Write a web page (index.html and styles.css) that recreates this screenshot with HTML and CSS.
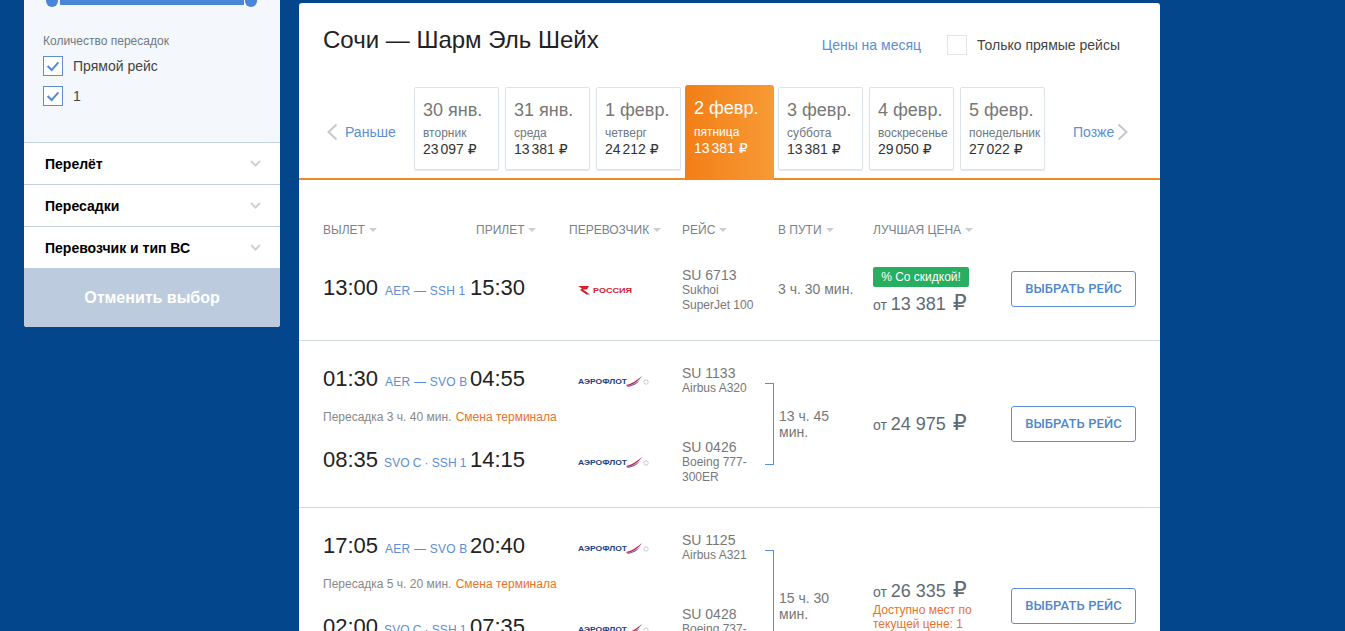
FILE: index.html
```html
<!DOCTYPE html>
<html lang="ru">
<head>
<meta charset="utf-8">
<title>Сочи — Шарм Эль Шейх</title>
<link rel="stylesheet" href="styles.css">
</head>
<body>
<svg class="defs" width="0" height="0" aria-hidden="true">
  <defs>
    <g id="aeroflot">
      <text x="1" y="12.5" class="aero-text" textLength="49" lengthAdjust="spacingAndGlyphs">АЭРОФЛОТ</text>
      <path d="M49 14 C55 13 60 9 65 5 C62 10 56 14 50 15 Z" fill="#c8204a"/>
      <path d="M50 15 C56 14 60 11 63 9 C60 13 56 15 51 16 Z" fill="#7b5aa6"/>
      <circle cx="69" cy="11" r="2.2" fill="none" stroke="#b9bec6" stroke-width=".8"/>
    </g>
    <path id="chev" d="M1 1 L5.500 5.500 L10 1" fill="none" stroke="#cdd2d8" stroke-width="2"/>
    <path id="tick" d="M4 10 L8.5 14.5 L16 6" fill="none" stroke="#4d8ad8" stroke-width="2.2"/>
  </defs>
</svg>
<aside class="sidebar">
  <div class="filter-box">
    <div class="slider"><span class="handle"></span><span class="track"></span><span class="handle"></span></div>
    <div class="filter-label">Количество пересадок</div>
    <div class="check-row"><span class="check"><svg width="18" height="18" viewBox="0 0 20 20"><use href="#tick"/></svg></span>Прямой рейс</div>
    <div class="check-row"><span class="check"><svg width="18" height="18" viewBox="0 0 20 20"><use href="#tick"/></svg></span>1</div>
  </div>
  <div class="acc">Перелёт<svg width="11" height="7"><use href="#chev"/></svg></div>
  <div class="acc">Пересадки<svg width="11" height="7"><use href="#chev"/></svg></div>
  <div class="acc">Перевозчик и тип ВС<svg width="11" height="7"><use href="#chev"/></svg></div>
  <div class="cancel">Отменить выбор</div>
</aside>
<main class="panel">
  <header class="head">
    <div class="title-row">
      <h1 class="title">Сочи — Шарм Эль Шейх</h1>
      <div class="options">
        <a class="month-link">Цены на месяц</a>
        <span class="box"></span>
        <span class="direct">Только прямые рейсы</span>
      </div>
    </div>
    <div class="strip">
      <div class="nav nav-prev"><svg width="12" height="18" viewBox="0 0 12 18"><path d="M10.5 1.5 L2.5 9 L10.5 16.5" fill="none" stroke="#c4c9cf" stroke-width="2"/></svg>Раньше</div>
      <div class="day"><b>30 янв.</b><i>вторник</i><span>23 097 <u class="rub">₽</u></span></div>
      <div class="day"><b>31 янв.</b><i>среда</i><span>13 381 <u class="rub">₽</u></span></div>
      <div class="day"><b>1 февр.</b><i>четверг</i><span>24 212 <u class="rub">₽</u></span></div>
      <div class="day day-active"><b>2 февр.</b><i>пятница</i><span>13 381 <u class="rub">₽</u></span></div>
      <div class="day"><b>3 февр.</b><i>суббота</i><span>13 381 <u class="rub">₽</u></span></div>
      <div class="day"><b>4 февр.</b><i>воскресенье</i><span>29 050 <u class="rub">₽</u></span></div>
      <div class="day"><b>5 февр.</b><i>понедельник</i><span>27 022 <u class="rub">₽</u></span></div>
      <div class="nav nav-next">Позже<svg width="12" height="18" viewBox="0 0 12 18"><path d="M1.5 1.5 L9.5 9 L1.5 16.5" fill="none" stroke="#c4c9cf" stroke-width="2"/></svg></div>
    </div>
  </header>

  <div class="cols">
    <span>ВЫЛЕТ</span><span>ПРИЛЕТ</span><span>ПЕРЕВОЗЧИК</span><span>РЕЙС</span><span>В ПУТИ</span><span>ЛУЧШАЯ ЦЕНА</span>
  </div>

  <section class="row row-first">
    <div class="legs">
      <div class="leg">
        <div class="dep"><span class="time">13:00</span><span class="route">AER — SSH 1</span></div>
        <div class="time">15:30</div>
        <div class="logo"><svg width="80" height="20" viewBox="0 0 80 20"><path d="M1 6 H12 L10 9.500 H6 L13 14.500 L9.500 14.500 L3 10 L5 8.500 Z" fill="#d5202f"/><text x="16" y="13" class="ross-text" textLength="39" lengthAdjust="spacingAndGlyphs">РОССИЯ</text></svg></div>
        <div class="flight"><strong>SU 6713</strong>Sukhoi<br>SuperJet 100</div>
      </div>
    </div>
    <div class="dur">3 ч. 30 мин.</div>
    <div class="price-cell"><div><span class="badge">% Со скидкой!</span><div class="price">от <em>13 381 <u class="rub">₽</u></em></div></div></div>
    <div class="btn-cell"><a class="btn">ВЫБРАТЬ РЕЙС</a></div>
  </section>

  <section class="row">
    <div class="legs">
      <div class="leg">
        <div class="dep"><span class="time">01:30</span><span class="route">AER — SVO B</span></div>
        <div class="time">04:55</div>
        <div class="logo"><svg width="80" height="20" viewBox="0 0 80 20"><use href="#aeroflot"/></svg></div>
        <div class="flight"><strong>SU 1133</strong>Airbus A320</div>
      </div>
      <div class="transfer">Пересадка 3 ч. 40 мин. <span>Смена терминала</span></div>
      <div class="leg">
        <div class="dep"><span class="time">08:35</span><span class="route route-tight">SVO C · SSH 1</span></div>
        <div class="time">14:15</div>
        <div class="logo"><svg width="80" height="20" viewBox="0 0 80 20"><use href="#aeroflot"/></svg></div>
        <div class="flight"><strong>SU 0426</strong>Boeing 777-<br>300ER</div>
      </div>
    </div>
    <div class="dur dur-multi"><span class="bracket"></span><span class="dur-text">13 ч. 45 мин.</span></div>
    <div class="price-cell"><div class="price">от <em>24 975 <u class="rub">₽</u></em></div></div>
    <div class="btn-cell"><a class="btn">ВЫБРАТЬ РЕЙС</a></div>
  </section>

  <section class="row row-last">
    <div class="legs">
      <div class="leg">
        <div class="dep"><span class="time">17:05</span><span class="route">AER — SVO B</span></div>
        <div class="time">20:40</div>
        <div class="logo"><svg width="80" height="20" viewBox="0 0 80 20"><use href="#aeroflot"/></svg></div>
        <div class="flight"><strong>SU 1125</strong>Airbus A321</div>
      </div>
      <div class="transfer">Пересадка 5 ч. 20 мин. <span>Смена терминала</span></div>
      <div class="leg">
        <div class="dep"><span class="time">02:00</span><span class="route route-tight">SVO C · SSH 1</span></div>
        <div class="time">07:35</div>
        <div class="logo"><svg width="80" height="20" viewBox="0 0 80 20"><use href="#aeroflot"/></svg></div>
        <div class="flight"><strong>SU 0428</strong>Boeing 737-<br>800</div>
      </div>
    </div>
    <div class="dur dur-multi"><span class="bracket"></span><span class="dur-text">15 ч. 30 мин.</span></div>
    <div class="price-cell"><div><div class="price">от <em>26 335 <u class="rub">₽</u></em></div><div class="seats">Доступно мест по текущей цене: 1</div></div></div>
    <div class="btn-cell"><a class="btn">ВЫБРАТЬ РЕЙС</a></div>
  </section>
</main>
</body>
</html>
```

FILE: styles.css
```css
* { box-sizing: border-box; }
html, body { height: 631px; overflow: hidden; }
body {
  margin: 0;
  background: #03468c;
  display: flex;
  align-items: flex-start;
  font-family: "Liberation Sans", Arial, sans-serif;
  color: #333;
}
.defs { position: absolute; }
.aero-text { font: bold 8px "Liberation Sans", sans-serif; fill: #1c3f86; }
.ross-text { font: bold 7px "Liberation Sans", sans-serif; fill: #d5202f; }
.rub { font-family: "DejaVu Sans", sans-serif; text-decoration: none; line-height: 0; }

/* sidebar */
.sidebar {
  width: 256px;
  margin-left: 24px;
  border-radius: 0 0 3px 3px;
  overflow: hidden;
  background: #fff;
}
.filter-box {
  height: 147px;
  background: #f4f8fd;
  padding: 0 19px;
}
.slider {
  display: flex;
  align-items: center;
  justify-content: space-between;
  height: 12px;
  margin: -5px 0 0 3px;
  width: 211px;
}
.handle { width: 12px; height: 12px; border-radius: 50%; background: #4a86d8; }
.track { width: 184px; height: 7px; background: #4a86d8; }
.filter-label { margin-top: 27px; font-size: 12px; line-height: 14px; color: #6f7882; }
.check-row {
  display: flex;
  align-items: center;
  height: 20px;
  margin-top: 10px;
  font-size: 14px;
  color: #444;
}
.filter-label + .check-row { margin-top: 8px; }
.check {
  display: flex;
  align-items: center;
  justify-content: center;
  width: 20px;
  height: 20px;
  margin-right: 10px;
  border: 1px solid #5a8fd0;
  background: #fff;
}
.acc {
  display: flex;
  align-items: center;
  justify-content: space-between;
  height: 42px;
  padding: 0 19px 0 21px;
  border-top: 1px solid #c5d0df;
  font-size: 14px;
  font-weight: bold;
  color: #000;
  background: #fff;
}
.cancel {
  height: 59px;
  background: #bccbdd;
  color: #fff;
  font-size: 16px;
  font-weight: bold;
  line-height: 59px;
  text-align: center;
}

/* panel */
.panel {
  width: 861px;
  margin: 3px 0 0 19px;
  background: #fff;
  border-radius: 3px 3px 0 0;
}
.head {
  height: 177px;
  padding-top: 23px;
  border-bottom: 2px solid #ee8a24;
}
.title-row {
  display: flex;
  justify-content: space-between;
  align-items: flex-start;
  height: 59px;
  padding: 0 40px 0 24px;
}
.title { margin: 0; font-size: 24px; font-weight: normal; line-height: 28px; color: #222; }
.options { display: flex; align-items: center; margin-top: 9px; font-size: 14px; }
.month-link { color: #5b8ed6; margin-right: 26px; }
.box { width: 20px; height: 20px; border: 1px solid #e2e5e8; margin-right: 10px; }
.direct { color: #444; }

.strip { display: flex; align-items: flex-start; gap: 6px; padding-left: 27px; }
.nav { display: flex; align-items: center; gap: 7px; height: 18px; margin-top: 38px; font-size: 14px; color: #5b8ed6; }
.nav-prev { width: 82px; }
.nav-next { margin-left: 22px; gap: 3px; }
.day {
  width: 85px;
  height: 83px;
  margin-top: 2px;
  padding: 12px 0 0 8px;
  border: 1px solid #dde3ea;
  border-radius: 2px;
  box-shadow: 0 1px 1px #e4e9ef;
  white-space: nowrap;
}
.day b { display: block; font-size: 18px; font-weight: normal; line-height: 21px; color: #777; }
.day i { display: block; margin-top: 6px; font-size: 12px; font-style: normal; line-height: 13px; color: #6f7882; }
.day span { display: block; font-size: 14px; line-height: 18px; color: #333; word-spacing: -2px; }
.day .rub { margin-left: 2px; }
.day-active {
  width: 89px;
  height: 95px;
  margin: 0 -2px;
  padding: 13px 0 0 9px;
  border: 0;
  border-radius: 3px 3px 0 0;
  box-shadow: none;
  background: linear-gradient(90deg, #f37e16, #f79a35);
}
.day-active b { color: #fff; }
.day-active i { color: #fff; margin-top: 7px; }
.day-active span { color: #fff; }

/* columns header */
.cols {
  display: grid;
  grid-template-columns: 153px 93px 113px 96px 95px 138px;
  padding: 43px 24px 0;
  height: 63px;
  font-size: 12px;
  line-height: 14px;
  color: #7a828a;
}
.cols span::after {
  content: "";
  display: inline-block;
  margin-left: 4px;
  vertical-align: 2px;
  border: 4px solid transparent;
  border-top-color: #c9ced4;
  border-bottom-width: 0;
}

/* rows */
.row {
  display: flex;
  padding: 25px 24px 0;
  min-height: 167px;
  border-bottom: 1px solid #d5dde5;
}
.row-first { min-height: 98px; }
.row-last { min-height: 196px; }
.legs { width: 455px; flex: none; }
.leg {
  display: grid;
  grid-template-columns: 147px 99px 113px 96px;
  align-items: center;
}
.dep { display: flex; align-items: baseline; white-space: nowrap; }
.time { font-size: 22px; line-height: 26px; color: #222; margin-bottom: 4px; }
.route { margin-left: 7px; font-size: 12px; letter-spacing: .22px; color: #5b8ed6; }
.route-tight { margin-left: 6px; letter-spacing: .1px; word-spacing: -.4px; }
.logo { display: flex; padding: 0 0 0 8px; }
.flight { font-size: 12px; line-height: 14.5px; color: #777; }
.flight strong { display: block; font-size: 14px; font-weight: normal; line-height: 15px; }
.transfer { height: 44px; padding-top: 14px; font-size: 12px; line-height: 14px; color: #888; }
.transfer span { margin-left: 1px; color: #e8722a; }

.dur {
  flex: none;
  width: 95px;
  margin-top: -25px;
  display: flex;
  align-items: center;
  padding-bottom: 5px;
  font-size: 14px;
  line-height: 16px;
  color: #777;
}
.dur-multi { width: 108px; margin-left: -13px; padding: 0; }
.dur-text { width: 70px; }
.bracket {
  flex: none;
  align-self: stretch;
  width: 9px;
  margin: 42px 5px 42px 0;
  border: 1px solid #5b8ed6;
  border-left: 0;
}
.price-cell { flex: none; width: 138px; margin-top: -25px; display: flex; align-items: center; }
.badge {
  display: block;
  width: 96px;
  height: 20px;
  margin-bottom: 6px;
  border-radius: 2px;
  background: #27ae60;
  color: #fff;
  font-size: 12px;
  line-height: 20px;
  text-align: center;
}
.price { font-size: 14px; line-height: 22px; color: #5f6a75; }
.price em { font-size: 18px; font-style: normal; }
.price .rub { font-size: 22px; margin-left: 2px; font-weight: normal; }
.seats { width: 110px; font-size: 12px; line-height: 14px; color: #e8722a; }
.btn-cell { flex: none; width: 125px; margin-top: -25px; display: flex; align-items: center; }
.row-first .btn-cell { padding-bottom: 6px; }
.btn {
  display: block;
  width: 125px;
  height: 36px;
  border: 1px solid #5b8ed6;
  border-radius: 3px;
  color: #4f86d0;
  font-family: Roboto, "Liberation Sans", sans-serif;
  font-size: 13px;
  font-weight: 500;
  line-height: 34px;
  text-align: center;
  letter-spacing: .1px;
}
```
